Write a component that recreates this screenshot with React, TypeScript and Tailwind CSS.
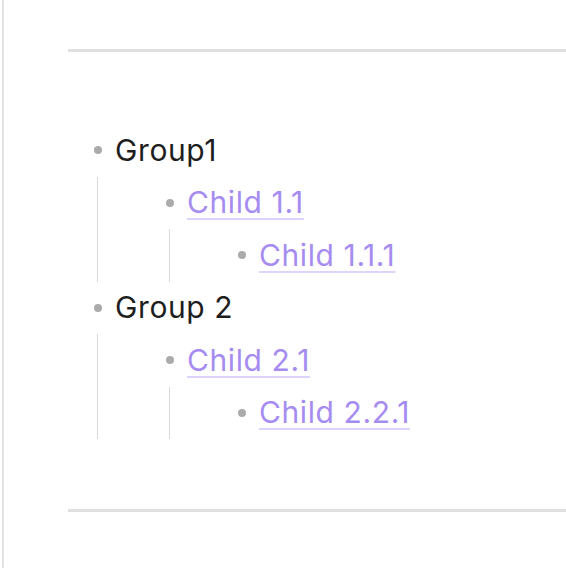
import React from 'react';

type Node = { label: string; link?: boolean; children?: Node[] };

const tree: Node[] = [
  {
    label: 'Group1',
    children: [{ label: 'Child 1.1', link: true, children: [{ label: 'Child 1.1.1', link: true }] }],
  },
  {
    label: 'Group 2',
    children: [{ label: 'Child 2.1', link: true, children: [{ label: 'Child 2.2.1', link: true }] }],
  },
];

const Item = ({ node }: { node: Node }) => (
  <li>
    <div className="flex items-center h-[52.5px] pl-[26px]">
      <span className="w-[8px] h-[8px] rounded-full bg-[#ababab] shrink-0" />
      {node.link ? (
        <a
          href="#"
          className="ml-[13px] text-[#a68cf1] underline decoration-[#ddd3fb] decoration-2 underline-offset-[5px]"
        >
          {node.label}
        </a>
      ) : (
        <span className="ml-[13px] text-[#1e1e1e]">{node.label}</span>
      )}
    </div>
    {node.children && (
      <ul className="ml-[29px] border-l-[1.5px] border-[#dadada] pl-[42px]">
        {node.children.map((c) => (
          <Item key={c.label} node={c} />
        ))}
      </ul>
    )}
  </li>
);

export default function App() {
  return (
    <div className="min-h-screen bg-white ml-[2px] border-l-2 border-[#e3e3e3] pl-[64px] pt-[49px] pb-[55px] font-['Inter',sans-serif] text-[30px] tracking-[0.02em]">
      <div className="h-[3px] bg-[#e0e0e0]" />
      <ul className="pt-[72px] pb-[70px]">
        {tree.map((n) => (
          <Item key={n.label} node={n} />
        ))}
      </ul>
      <div className="h-[3px] bg-[#e0e0e0]" />
    </div>
  );
}
